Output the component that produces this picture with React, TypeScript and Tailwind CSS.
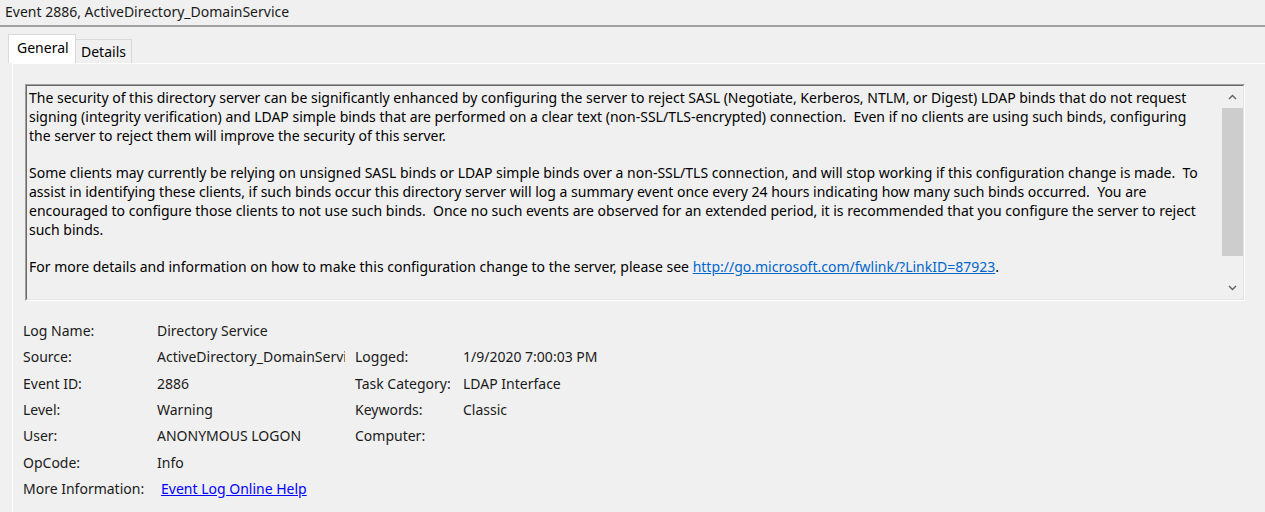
import React from 'react';

const font = { fontFamily: '"Noto Sans", "Open Sans", sans-serif' };

const bodyLines: React.ReactNode[] = [
  'The security of this directory server can be significantly enhanced by configuring the server to reject SASL (Negotiate, Kerberos, NTLM, or Digest) LDAP binds that do not request',
  'signing (integrity verification) and LDAP simple binds that are performed on a clear text (non-SSL/TLS-encrypted) connection.  Even if no clients are using such binds, configuring',
  'the server to reject them will improve the security of this server.',
  '',
  'Some clients may currently be relying on unsigned SASL binds or LDAP simple binds over a non-SSL/TLS connection, and will stop working if this configuration change is made.  To',
  'assist in identifying these clients, if such binds occur this directory server will log a summary event once every 24 hours indicating how many such binds occurred.  You are',
  'encouraged to configure those clients to not use such binds.  Once no such events are observed for an extended period, it is recommended that you configure the server to reject',
  'such binds.',
  '',
  <>
    For more details and information on how to make this configuration change to the server, please see{' '}
    <span className="text-[#0066cc] underline">http://go.microsoft.com/fwlink/?LinkID=87923</span>.
  </>,
  '',
  'You can enable additional logging to log an event each time a client makes such a bind, including information on which client made the bind.  To do so, please raise the setting for',
  'the "LDAP Interface Events" event logging category to level 2 or higher.',
];

const details = [
  ['Log Name:', 'Directory Service', '', ''],
  ['Source:', 'ActiveDirectory_DomainService', 'Logged:', '1/9/2020 7:00:03 PM'],
  ['Event ID:', '2886', 'Task Category:', 'LDAP Interface'],
  ['Level:', 'Warning', 'Keywords:', 'Classic'],
  ['User:', 'ANONYMOUS LOGON', 'Computer:', ''],
  ['OpCode:', 'Info', '', ''],
];

function Chevron({ up }: { up?: boolean }) {
  return (
    <svg width="9" height="6" viewBox="0 0 9 6" className="block">
      <path
        d={up ? 'M1 5 L4.5 1.5 L8 5' : 'M1 1 L4.5 4.5 L8 1'}
        fill="none"
        stroke="#606060"
        strokeWidth="1.4"
      />
    </svg>
  );
}

export default function App() {
  return (
    <div className="w-[1265px] h-[512px] overflow-hidden bg-[#f0f0f0] text-black" style={font}>
      {/* Title */}
      <div className="h-[25px] pl-[5px] pt-[2px] text-[14px] leading-[20px] text-[#1a1a1a]">
        Event 2886, ActiveDirectory_DomainService
      </div>
      <div className="h-[2px] bg-[#a0a0a0]" />

      {/* Tabs */}
      <div className="flex items-end h-[36px] pl-[8px]">
        <div className="h-[29px] w-[68px] bg-white border border-b-0 border-[#d9d9d9] pl-[8px] pt-[3px] text-[14px] leading-[20px] relative z-10">
          General
        </div>
        <div className="h-[24px] w-[56px] bg-[#f0f0f0] border border-l-0 border-b-0 border-[#d9d9d9] pl-[5px] pt-[2px] text-[14px] leading-[20px]">
          Details
        </div>
      </div>

      {/* Tab panel */}
      <div className="ml-[12px] border-l border-t border-white h-[460px] pt-[20px] pl-[12px]">
        {/* Description box */}
        <div className="w-[1220px] h-[217px] border-t border-l border-[#a0a0a0] border-r-white border-b-white border-r border-b">
          <div className="h-full flex border-t border-l border-[#696969] border-r-[#e3e3e3] border-b-[#e3e3e3] border-r border-b">
            <div className="flex-1 overflow-hidden pl-[2px] pt-[3px] text-[14px] leading-[18.8px]">
              {bodyLines.map((line, i) => (
                <div key={i} className="h-[18.8px] whitespace-pre">
                  {line}
                </div>
              ))}
            </div>
            <div className="w-[21px] flex flex-col items-center">
              <div className="h-[22px] flex items-center justify-center">
                <Chevron up />
              </div>
              <div className="w-full h-[148px] bg-[#cdcdcd]" />
              <div className="flex-1" />
              <div className="h-[22px] flex items-center justify-center">
                <Chevron />
              </div>
            </div>
          </div>
        </div>

        {/* Details grid */}
        <div className="mt-[17px] -ml-[2px] text-[14px] leading-[20px] text-[#1a1a1a]">
          {details.map(([l1, v1, l2, v2]) => (
            <div key={l1} className="flex h-[26.33px] items-center">
              <div className="w-[134px] shrink-0">{l1}</div>
              <div className="w-[188px] shrink-0 overflow-hidden whitespace-nowrap">{v1}</div>
              <div className="w-[10px] shrink-0" />
              <div className="w-[108px] shrink-0">{l2}</div>
              <div>{v2}</div>
            </div>
          ))}
          <div className="flex h-[26.33px] items-center">
            <div className="w-[138px] shrink-0">More Information:</div>
            <div className="text-[#0000ff] underline">Event Log Online Help</div>
          </div>
        </div>
      </div>
    </div>
  );
}
